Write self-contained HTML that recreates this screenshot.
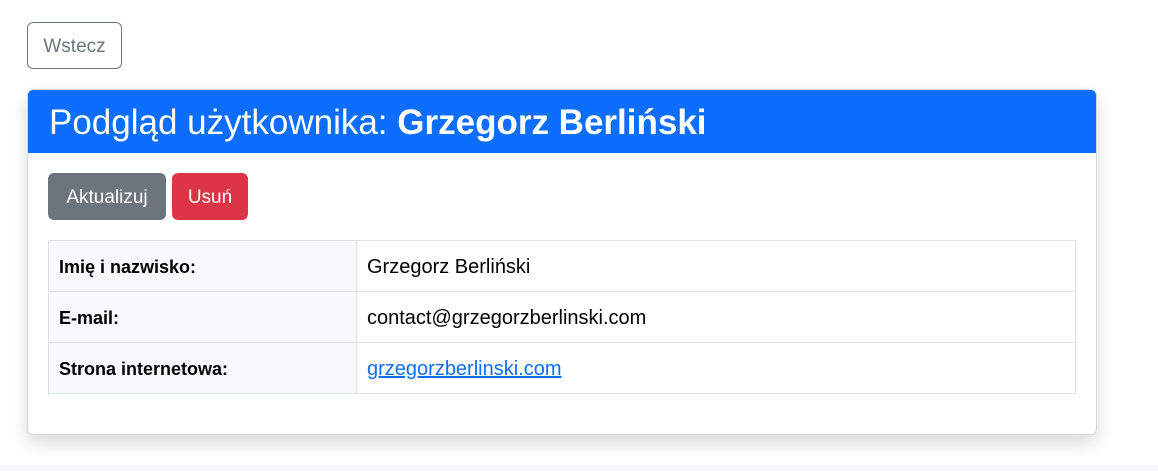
<!DOCTYPE html>
<html><head><meta charset="utf-8"><style>
*{box-sizing:border-box}
body{margin:0;width:1158px;height:471px;background:#fff;font-family:"Liberation Sans",sans-serif;color:#212529;position:relative;overflow:hidden}
.strip{position:absolute;left:0;right:0;top:465px;bottom:0;background:#f7f8fa}
.back{position:absolute;left:27px;top:22px;width:95px;height:47px;border:1px solid #6c757d;border-radius:6px;color:#6c757d;font-size:19px;display:flex;align-items:center;justify-content:center;padding-top:2px}
.card{position:absolute;left:27px;top:89px;width:1070px;height:346px;border:1px solid #d6d8db;border-radius:6px;background:#fff;box-shadow:0 8px 18px rgba(0,0,0,.15);overflow:hidden}
.hd{height:63px;background:#0d6efd;color:#fff;font-size:35px;padding-left:21px;line-height:66px;white-space:nowrap}
.btn{position:absolute;top:83px;height:47px;border-radius:6px;color:#fff;font-size:19px;display:flex;align-items:center;justify-content:center;padding-top:2px}
table{position:absolute;left:20px;top:150px;width:1028px;border-collapse:collapse;font-size:20px}
td{border:1px solid #dee2e6;height:51px;padding:3px 10px 0}
td:first-child{width:308px;background:#f8f9fa;font-weight:bold;color:#000;font-size:18px}
td:last-child{color:#000}
a{color:#0d6efd;text-decoration:underline}
</style></head><body>
<div class="back">Wstecz</div>
<div class="card">
<div class="hd">Podgląd użytkownika: <b>Grzegorz Berliński</b></div>
<div class="btn" style="left:20px;width:118px;background:#6c757d">Aktualizuj</div>
<div class="btn" style="left:144px;width:76px;background:#dc3545">Usuń</div>
<table>
<tr><td>Imię i nazwisko:</td><td>Grzegorz Berliński</td></tr>
<tr><td>E-mail:</td><td>contact@grzegorzberlinski.com</td></tr>
<tr><td>Strona internetowa:</td><td><a>grzegorzberlinski.com</a></td></tr>
</table>
</div>
<div class="strip"></div>
</body></html>
